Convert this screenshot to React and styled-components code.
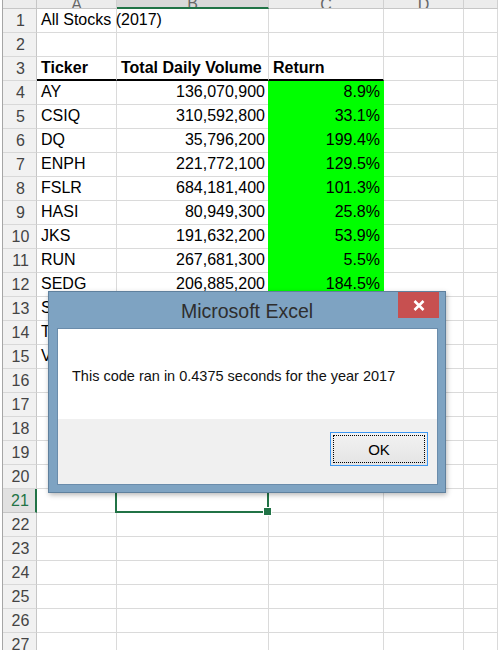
import React from "react";
import styled, { createGlobalStyle, css } from "styled-components";

const GlobalStyle = createGlobalStyle`
  * { box-sizing: border-box; }
  html, body { margin: 0; padding: 0; background: #fff; overflow: hidden; }
`;

const GRID = "#dadada";
const XL_GREEN = "#217346";

const COLS = [
  { key: "A", w: 80 },
  { key: "B", w: 152 },
  { key: "C", w: 115 },
  { key: "D", w: 80 },
];

const Sheet = styled.div`
  position: relative;
  width: 498px;
  height: 650px;
  overflow: hidden;
  font-family: "Liberation Sans", Arial, sans-serif;
  color: #000;
`;

const HeaderRow = styled.div`
  display: flex;
  height: 9px;
`;

const Row = styled.div`
  display: flex;
  height: 24px;
`;

const Gutter = styled.div`
  flex: none;
  width: 3px;
  border-right: 1px solid #a6a6a6;
  background: #fff;
`;

const Corner = styled.div`
  flex: none;
  width: 34px;
  background: #ececec;
  border-right: 1px solid #c6c6c6;
  border-bottom: 1px solid #c6c6c6;
`;

const ColHead = styled.div`
  flex: ${(p) => (p.$w ? "none" : "1")};
  width: ${(p) => (p.$w ? `${p.$w}px` : "auto")};
  display: flex;
  justify-content: center;
  align-items: flex-end;
  overflow: hidden;
  background: ${(p) => (p.$active ? "#d9d9d9" : "#ececec")};
  border-right: 1px solid #d0d0d0;
  border-bottom: ${(p) => (p.$active ? `2px solid ${XL_GREEN}` : "1px solid #c6c6c6")};
  color: #666;
  font-size: 16px;
  line-height: 16px;
`;

const ColLetter = styled.span`
  transform: translateY(5px);
`;

const RowHead = styled.div`
  flex: none;
  width: 34px;
  display: flex;
  align-items: center;
  justify-content: center;
  padding-left: 2px;
  padding-top: 1px;
  font-size: 16px;
  background: ${(p) => (p.$active ? "#e1e1e1" : "#f1f1f1")};
  color: ${(p) => (p.$active ? XL_GREEN : "#444")};
  border-bottom: 1px solid ${(p) => (p.$active ? "#c6c6c6" : "#d8d8d8")};
  border-right: ${(p) => (p.$active ? `2px solid ${XL_GREEN}` : "1px solid #c6c6c6")};
`;

const Cell = styled.div`
  position: relative;
  flex: ${(p) => (p.$w ? "none" : "1")};
  width: ${(p) => (p.$w ? `${p.$w}px` : "auto")};
  display: flex;
  align-items: flex-end;
  justify-content: ${(p) => (p.$right ? "flex-end" : "flex-start")};
  padding: 0 3px 2px 4px;
  font-size: 16px;
  line-height: 20px;
  white-space: nowrap;
  font-weight: ${(p) => (p.$bold ? 700 : 400)};
  border-right: 1px solid ${GRID};
  border-bottom: 1px solid ${GRID};
  ${(p) =>
    p.$underline &&
    css`
      border-bottom: 2px solid #000;
      padding-bottom: 1px;
    `}
  ${(p) =>
    p.$fill &&
    css`
      background: ${p.$fill};
      border-right-color: ${p.$fill};
      border-bottom-color: ${p.$underline ? "#000" : p.$fill};
      box-shadow: -1px 0 0 ${p.$fill};
    `}
  ${(p) =>
    p.$selected &&
    css`
      &::after {
        content: "";
        position: absolute;
        left: -2px;
        top: -1px;
        right: -1px;
        bottom: -1px;
        border: 2px solid ${XL_GREEN};
        pointer-events: none;
      }
      &::before {
        content: "";
        position: absolute;
        right: -4px;
        bottom: -4px;
        width: 7px;
        height: 7px;
        background: ${XL_GREEN};
        border: 1px solid #fff;
        z-index: 1;
      }
    `}
`;

const Dialog = styled.div`
  position: absolute;
  left: 48px;
  top: 291px;
  width: 398px;
  height: 202px;
  display: flex;
  flex-direction: column;
  background: #7ea3c2;
  border: 1px solid #5f809d;
  box-shadow: 1px 2px 5px rgba(0, 0, 0, 0.28);
  z-index: 5;
`;

const TitleBar = styled.div`
  flex: none;
  height: 36px;
  display: grid;
  grid-template-columns: 1fr auto 1fr;
`;

const Title = styled.div`
  grid-column: 2;
  align-self: center;
  padding-top: 3px;
  font-size: 19.5px;
  color: #2e2e2e;
  white-space: nowrap;
`;

const CloseButton = styled.div`
  grid-column: 3;
  justify-self: end;
  align-self: start;
  width: 41px;
  height: 26px;
  margin-right: 6px;
  background: #c75050;
  display: flex;
  align-items: center;
  justify-content: center;
`;

const Client = styled.div`
  flex: 1;
  margin: 0 7px 7px 8px;
  border: 1px solid #6a8cab;
  display: flex;
  flex-direction: column;
`;

const MessageArea = styled.div`
  flex: 1;
  background: #fff;
  display: flex;
  align-items: center;
  padding: 3px 0 0 14px;
  font-size: 14.5px;
  color: #111;
`;

const ButtonArea = styled.div`
  flex: none;
  height: 65px;
  background: #f0f0f0;
  display: flex;
  justify-content: flex-end;
  align-items: flex-start;
  padding: 13px 9px 0 0;
`;

const OkButton = styled.div`
  position: relative;
  width: 98px;
  height: 34px;
  border: 1px solid #3c97f2;
  background: linear-gradient(#f2f2f2, #e4e4e4);
  display: flex;
  align-items: center;
  justify-content: center;
  font-size: 15px;
  color: #000;
  &::after {
    content: "";
    position: absolute;
    inset: 2px;
    border: 1px dotted #000;
  }
`;

const data = [
  ["AY", "136,070,900", "8.9%"],
  ["CSIQ", "310,592,800", "33.1%"],
  ["DQ", "35,796,200", "199.4%"],
  ["ENPH", "221,772,100", "129.5%"],
  ["FSLR", "684,181,400", "101.3%"],
  ["HASI", "80,949,300", "25.8%"],
  ["JKS", "191,632,200", "53.9%"],
  ["RUN", "267,681,300", "5.5%"],
  ["SEDG", "206,885,200", "184.5%"],
  ["SPWR", "782,187,000", "23.1%"],
  ["TERP", "139,402,800", "-7.2%"],
  ["VSLR", "136,256,000", "50.0%"],
];

function buildRows() {
  const rows = [];
  for (let r = 1; r <= 27; r++) {
    let a = "", b = "", c = "";
    let bold = false, underline = false, fill = null;
    if (r === 1) a = "All Stocks (2017)";
    if (r === 3) {
      a = "Ticker"; b = "Total Daily Volume"; c = "Return";
      bold = true; underline = true;
    }
    if (r >= 4 && r <= 15) {
      [a, b, c] = data[r - 4];
      fill = c.startsWith("-") ? "#ff0000" : "#00ff00";
    }
    rows.push({ r, a, b, c, bold, underline, fill });
  }
  return rows;
}

const SELECTED_ROW = 21;

export default function App() {
  const rows = buildRows();
  return (
    <>
      <GlobalStyle />
      <Sheet>
        <HeaderRow>
          <Gutter />
          <Corner />
          {COLS.map((c) => (
            <ColHead key={c.key} $w={c.w} $active={c.key === "B"}>
              <ColLetter>{c.key}</ColLetter>
            </ColHead>
          ))}
          <ColHead />
        </HeaderRow>
        {rows.map((row) => (
          <Row key={row.r}>
            <Gutter />
            <RowHead $active={row.r === SELECTED_ROW}>{row.r}</RowHead>
            <Cell $w={80} $bold={row.bold} $underline={row.underline}>
              {row.a}
            </Cell>
            <Cell
              $w={152}
              $right={!row.bold}
              $bold={row.bold}
              $underline={row.underline}
              $selected={row.r === SELECTED_ROW}
            >
              {row.b}
            </Cell>
            <Cell
              $w={115}
              $right={!row.bold}
              $bold={row.bold}
              $underline={row.underline}
              $fill={row.fill}
            >
              {row.c}
            </Cell>
            <Cell $w={80} />
            <Cell />
          </Row>
        ))}
        <Dialog>
          <TitleBar>
            <Title>Microsoft Excel</Title>
            <CloseButton>
              <svg width="12" height="11" viewBox="0 0 12 11">
                <path d="M1.5 1 L10.5 10 M10.5 1 L1.5 10" stroke="#fff" strokeWidth="2.6" />
              </svg>
            </CloseButton>
          </TitleBar>
          <Client>
            <MessageArea>This code ran in 0.4375 seconds for the year 2017</MessageArea>
            <ButtonArea>
              <OkButton>OK</OkButton>
            </ButtonArea>
          </Client>
        </Dialog>
      </Sheet>
    </>
  );
}
